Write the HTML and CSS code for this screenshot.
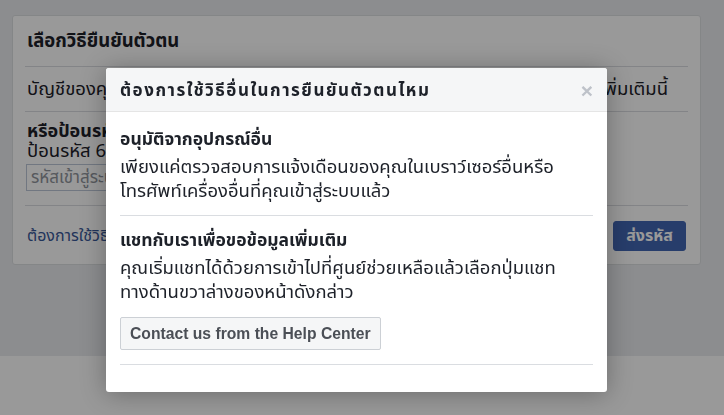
FILE: index.html
```html
<!DOCTYPE html>
<html lang="th">
<head>
<meta charset="utf-8">
<title>ยืนยันตัวตน</title>
<link rel="stylesheet" href="styles.css">
</head>
<body>
<div class="page">
  <div class="content">
    <div class="card">
      <div class="card-title">เลือกวิธียืนยันตัวตน</div>
      <div class="card-row">
        <span>บัญชีของคุณต้องได้รับการยืนยัน</span>
        <span>โปรดใช้ข้อมูลเพิ่มเติมนี้</span>
      </div>
      <div class="card-code">
        <div class="code-title">หรือป้อนรหัสจากแอพยืนยันตัวตน</div>
        <div class="code-sub">ป้อนรหัส 6 หลักที่สร้างโดยแอพยืนยันตัวตนของคุณ</div>
        <input class="code-input" type="text" placeholder="รหัสเข้าสู่ระบบ">
      </div>
      <div class="card-foot">
        <a class="foot-link" href="#">ต้องการใช้วิธีอื่นในการยืนยันตัวตนไหม</a>
        <button class="btn-primary">ส่งรหัส</button>
      </div>
    </div>
  </div>
  <div class="footer"></div>
</div>
<div class="overlay"></div>
<div class="modal">
  <div class="modal-head">
    <span class="modal-title">ต้องการใช้วิธีอื่นในการยืนยันตัวตนไหม</span>
    <span class="modal-close">×</span>
  </div>
  <div class="modal-body">
    <div class="section">
      <div class="sec-title">อนุมัติจากอุปกรณ์อื่น</div>
      <div class="sec-text">เพียงแค่ตรวจสอบการแจ้งเดือนของคุณในเบราว์เซอร์อื่นหรือ<br>โทรศัพท์เครื่องอื่นที่คุณเข้าสู่ระบบแล้ว</div>
    </div>
    <div class="section">
      <div class="sec-title">แชทกับเราเพื่อขอข้อมูลเพิ่มเติม</div>
      <div class="sec-text">คุณเริ่มแชทได้ด้วยการเข้าไปที่ศูนย์ช่วยเหลือแล้วเลือกปุ่มแชท<br>ทางด้านขวาล่างของหน้าดังกล่าว</div>
      <button class="btn-help">Contact us from the Help Center</button>
    </div>
  </div>
</div>
</body>
</html>
```
FILE: styles.css
```css
html, body {
  margin: 0;
  padding: 0;
  height: 100%;
}
body {
  background: #e9ebee;
  font-family: Tahoma, "Noto Sans Thai", "Leelawadee UI", "Noto Sans", sans-serif;
  color: #1d2129;
  overflow: hidden;
}
.page {
  display: flex;
  flex-direction: column;
  height: 100%;
}
.content {
  height: 356px;
  padding: 15px 23px 0 12px;
  box-sizing: border-box;
}
.footer {
  flex: 1;
  background: #fff;
}
.card {
  background: #fff;
  border: 1px solid #dddfe2;
  border-radius: 3px;
  padding: 0 12px;
  height: 250px;
  box-sizing: border-box;
}
.card-title {
  font-size: 18.5px;
  font-weight: bold;
  height: 50px;
  line-height: 50px;
  padding-left: 2px;
  border-bottom: 1px solid #dadde1;
}
.card-row {
  display: flex;
  justify-content: space-between;
  font-size: 18.5px;
  height: 44px;
  line-height: 44px;
  padding: 0 20px 0 2px;
  border-bottom: 1px solid #dadde1;
  white-space: nowrap;
}
.card-code {
  padding: 10px 0 14px 2px;
  border-bottom: 1px solid #dadde1;
}
.code-title {
  font-size: 18px;
  font-weight: bold;
  line-height: 20px;
}
.code-sub {
  font-size: 18.5px;
  line-height: 19px;
}
.code-input {
  display: block;
  margin: 3px 0 0 -1px;
  width: 260px;
  height: 27px;
  box-sizing: border-box;
  border: 1px solid #bdc7d8;
  font-family: inherit;
  font-size: 17px;
  padding: 0 4px;
}
.code-input::placeholder {
  color: #90949c;
}
.card-foot {
  display: flex;
  align-items: center;
  justify-content: space-between;
  height: 59px;
  padding-left: 2px;
}
.foot-link {
  color: #385898;
  text-decoration: none;
  font-size: 16px;
}
.btn-primary {
  background: #4267b2;
  border: 1px solid #4267b2;
  color: #fff;
  font-family: inherit;
  font-weight: bold;
  font-size: 16px;
  height: 30px;
  width: 73px;
  border-radius: 3px;
  margin-right: 2px;
  padding: 0;
}
.overlay {
  position: fixed;
  inset: 0;
  background: rgba(0, 0, 0, 0.4);
}
.modal {
  position: absolute;
  left: 106px;
  top: 68px;
  width: 501px;
  height: 324px;
  background: #fff;
  border-radius: 3px;
  box-shadow: 0 2px 26px rgba(0, 0, 0, 0.3);
  overflow: hidden;
}
.modal-head {
  display: flex;
  align-items: center;
  justify-content: space-between;
  background: #f5f6f7;
  border-bottom: 1px solid #e5e5e5;
  padding: 2px 14px 0;
  box-sizing: border-box;
  height: 44px;
}
.modal-title {
  font-size: 17px;
  letter-spacing: 1.5px;
  font-weight: bold;
  color: #1d2129;
}
.modal-close {
  color: #bec2c9;
  font-size: 21px;
  font-weight: bold;
  font-family: "Liberation Sans", Arial, sans-serif;
  line-height: 1;
}
.modal-body {
  padding: 15px 14px 0;
}
.section {
  border-bottom: 1px solid #dadde1;
  padding-bottom: 12px;
}
.section + .section {
  padding-top: 12px;
}
.sec-title {
  font-size: 17.5px;
  font-weight: bold;
  line-height: 26px;
  margin-bottom: 2px;
  color: #1d2129;
}
.sec-text {
  font-size: 18.5px;
  line-height: 24px;
  color: #1d2129;
}
.btn-help {
  display: block;
  margin-top: 13px;
  margin-bottom: 2px;
  height: 33px;
  padding: 0 9px;
  background: #f5f6f7;
  border: 1px solid #ccd0d5;
  border-radius: 2px;
  color: #4b4f56;
  font-family: "Liberation Sans", Arial, sans-serif;
  font-weight: bold;
  font-size: 15.7px;
}
```
